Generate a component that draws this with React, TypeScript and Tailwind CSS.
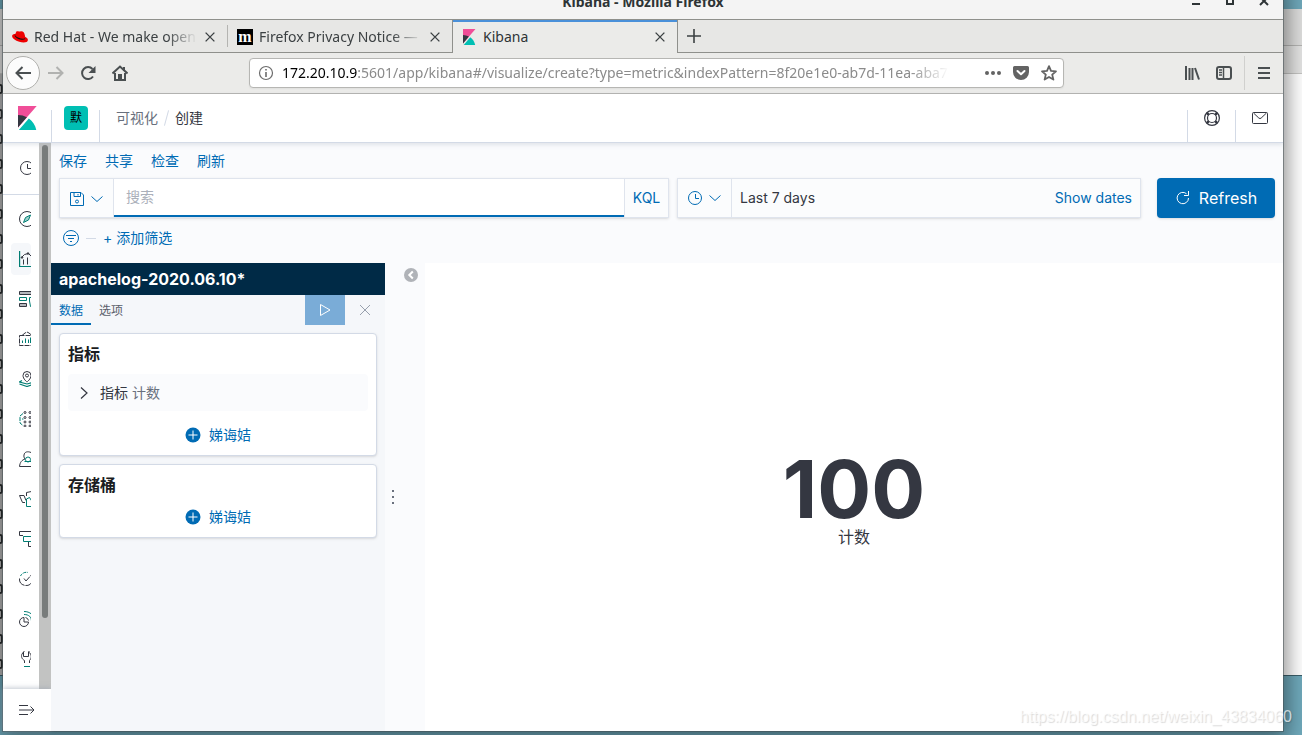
import { useState } from "react";
import type { ReactNode } from "react";

type IconProps = {
    children: ReactNode;
    className?: string;
}

const Icon = ({ children, className = "w-4 h-4" }: IconProps) => (
    <svg viewBox="0 0 16 16" fill="none" stroke="currentColor" className={`shrink-0 ${className}`} aria-hidden="true">
        {children}
    </svg>
);

const KibanaLogo = ({ className }: { className: string }) => (
    <svg viewBox="0 0 32 32" className={`shrink-0 ${className}`} aria-hidden="true">
        <path fill="#F04E98" d="M4 0v28.789L28.935.017z" />
        <path fill="#343741" d="M4 12v16.789l11.906-13.738A24.721 24.721 0 0 0 4 12" />
        <path fill="#00BFB3" d="M18.479 16.664 6.268 30.754l-1.073 1.237h23.191c-1.252-6.292-4.883-11.719-9.908-15.327" />
    </svg>
);

const RedHatLogo = () => (
    <svg viewBox="0 0 16 16" className="w-4 h-4 shrink-0" aria-hidden="true">
        <path fill="#e00" d="M4.4 2.6c.7-.6 1.7-.4 2.5-.1.9.3 1.4-.4 2.4-.2 2 .3 3 1.200 3.600 4.200l.3 1.500c1.600.500 2.800 1.700 2.700 3-.200 2.800-4.700 3-8.600 1.800C3.400 11.500 0 9.300.1 7c0-1.300 1.500-1.900 3.200-1.900z" />
        <path fill="#111" d="M3.300 5.200c-.2.500-.3 1.100.2 1.600 1.600 1.800 5.300 3.200 8.100 2.900 1.300-.1 1.900-.7 1.600-1.700l.1.500c.2 1.400-.8 2.200-2.400 2.300C7.900 11 4 9 3 7.200c-.4-.7-.2-1.400.3-2z" />
    </svg>
);

const CloseIcon = ({ className }: { className?: string }) => (
    <Icon className={className}><path strokeWidth="1.6" d="M3 3l10 10M13 3L3 13" /></Icon>
);

const Clock = () => <Icon><circle cx="8" cy="8" r="6.500" /><path d="M8.500 4v4.500H12" /></Icon>;

const ChevronDown = () => <Icon><path d="M2.500 5.500 8 10.500l5.500-5" /></Icon>;

const navItems = [
    {
        label: "Discover",
        icon: <><circle cx="8" cy="8" r="7.500" /><path stroke="#017d73" fill="#9fd0cb" d="M4.500 11.500 6.500 6.500l5-2.500-2 5z" /></>
    },
    {
        label: "Visualize",
        icon: <><path stroke="#017d73" strokeWidth="1.200" d="M.6 0v15.500H16" /><path d="M4.500 13.500V8.500M8.500 13.500V6.500M2.500 6.500l3-3 4-1 4 4" /><circle cx="3" cy="6.500" r=".8" fill="currentColor" /><circle cx="9" cy="2.500" r=".8" fill="currentColor" /></>
    },
    {
        label: "Dashboard",
        icon: <><path fill="#b5b7bc" d="M16 .5H.5v3H16" /><path fill="#b5b7bc" d="M.5 12.500h7v3h-7z" /><path stroke="#017d73" d="M.5 6.500h7v3h-7zM16 6.500h-5.500v3.500l1 5.500H16" /></>
    },
    {
        label: "Canvas",
        icon: <><path d="M.5 4.500h15v10H.5zM3 4.500l3-2.500 2-1 2 1 3 2.500" strokeDasharray="5 1" /><path stroke="#017d73" d="M3.500 12V9.500M6.500 12V7.500M9.500 12V8.500M11.500 12V6.500" /></>
    },
    {
        label: "Maps",
        icon: <><path d="M8 11S4 8 4 4.500a4 4 0 0 1 8 0C12 8 8 11 8 11z" /><circle cx="8" cy="4.500" r="1.500" /><path stroke="#017d73" strokeWidth="1.200" d="M3 9.500.5 11 8 13l7.500-2L13 9.500M.5 13 8 15.500l7.500-2.500" /></>
    },
    {
        label: "Machine Learning",
        icon: <><path stroke="#017d73" d="M4 2.500 1 5v7l3 2.500M4.500 8H3" strokeDasharray="4 1" /><circle cx="6" cy="1.500" r="1" /><circle cx="11" cy="1.500" r="1" /><circle cx="6" cy="6.500" r="1" /><circle cx="11" cy="6.500" r="1" /><circle cx="6" cy="11" r="1" /><circle cx="11" cy="11" r="1" /><circle cx="6" cy="15" r="1" /><circle cx="11" cy="15" r="1" /></>
    },
    {
        label: "Infrastructure",
        icon: <><path d="M12 1.500C9 .2 5.500.5 5 4c-.3 1.500 0 2.500 1 4C3 9 1 11 .5 15.500H16" /><path stroke="#017d73" d="M5.500 10.500h10" /><circle stroke="#017d73" cx="9" cy="8.500" r="2.500" /></>
    },
    {
        label: "Logs",
        icon: <><path d="M6 11.500H3.500L.5 4.500H5l2 5M7.500 5V1.500L12.500.5V5" /><path stroke="#017d73" d="M7.500 15.500V8l3-1.500 2.500 4v5z" /></>
    },
    {
        label: "APM",
        icon: <><path d="M16 .5H.5v4H4M9.500 11v4.500H16" /><path stroke="#017d73" d="M16 5.500H4.500v5H16" /></>
    },
    {
        label: "Uptime",
        icon: <><path d="M.5 7.500a6.500 6.500 0 0 0 13 1M5 7.500l2 2.500 7-8" strokeDasharray="9 1" /><path stroke="#017d73" d="M1.500 5A6.500 6.500 0 0 1 9 1.500" strokeDasharray="3 1" /></>
    },
    {
        label: "SIEM",
        icon: <><path d="M5 6.500a4.500 4.500 0 1 0 4.500 4.500H5z" /><path d="M6.500 6.500a4 4 0 0 1 3 3" /><path stroke="#017d73" d="M5 3.500c5 0 7.500 2.500 7.500 7M5 .5c6 0 10 3.500 10.500 9" /></>
    },
    {
        label: "Dev Tools",
        icon: <><path d="M5.500 12V9.500C2.500 8 2 5 3 3l1.500-2v4.500h5V1C13 3 13 7 10.500 9.500V12M4.500.5h1M9.500.5h1" /><path stroke="#017d73" d="M5 15.500h6" /></>
    },
];

const menuLinks = ["保存", "共享", "检查", "刷新"];

const BrowserTabs = () => (
    <div className="flex h-[33px] items-stretch border-b border-[#8f908c] bg-[#e7e7e5] text-sm text-[#3c4143]">
        <div className="flex w-56 items-center pl-[9px] pr-2.5 pt-0.5">
            <RedHatLogo />
            <a href="#redhat" className="ml-1.5 flex-1 overflow-hidden whitespace-nowrap [mask-image:linear-gradient(to_left,transparent,black_30px)]">Red Hat - We make open source</a>
            <button aria-label="Close tab" className="ml-1.5"><CloseIcon className="w-[14px] h-[14px]" /></button>
        </div>
        <div className="my-[5px] w-px bg-[#b4b4b1]" />
        <div className="flex w-56 items-center pl-[9px] pr-2.5 pt-0.5">
            <span className="flex h-4 w-4 shrink-0 items-center justify-center bg-black font-['Liberation_Serif',serif] text-base font-bold leading-4 text-white">m</span>
            <a href="#privacy" className="ml-1.5 flex-1 overflow-hidden whitespace-nowrap [mask-image:linear-gradient(to_left,transparent,black_30px)]">Firefox Privacy Notice — Mozilla</a>
            <button aria-label="Close tab" className="ml-1.5"><CloseIcon className="w-[14px] h-[14px]" /></button>
        </div>
        <div className="relative -mb-px flex w-[226px] items-center border-x border-[#8f908c] bg-[#ebebe9] pl-2 pr-2.5 shadow-[inset_0_3px_0_-1px_#4a90d9]">
            <KibanaLogo className="w-4 h-4" />
            <a href="#kibana" className="ml-1.5 flex-1 text-[#2e3436]">Kibana</a>
            <button aria-label="Close tab"><CloseIcon className="w-[14px] h-[14px]" /></button>
        </div>
        <button aria-label="New tab" className="ml-2"><Icon><path strokeWidth="1.600" d="M8 1v14M1 8h14" /></Icon></button>
    </div>
);

const AddressBar = () => (
    <div className="flex h-[41px] items-center border-b border-[#b3b3b0] bg-[#ebebe9] text-[#4a4f51]">
        <button aria-label="Back" className="ml-[3px] flex h-[34px] w-[34px] items-center justify-center rounded-full border border-[#b0b0ad] bg-[#fcfcfc]">
            <Icon><path strokeWidth="2" d="M16 8H1.500M7.500 2l-6 6 6 6" /></Icon>
        </button>
        <div className="ml-2 flex gap-4">
            <button aria-label="Forward" className="text-[#b1b2b0]"><Icon><path strokeWidth="2" d="M0 8h14.500M8.500 2l6 6-6 6" /></Icon></button>
            <button aria-label="Reload"><Icon><path strokeWidth="2" d="M13 11.500A6 6 0 1 1 12.500 4" /><path fill="currentColor" stroke="none" d="M15.500 1v7h-7z" /></Icon></button>
            <button aria-label="Home"><Icon><path strokeWidth="2" d="M.5 8.500 8 1.500l7.500 7M3 8v7h10V8" /><path fill="currentColor" stroke="none" d="M6 9h4v6H6zM11 2h2v4h-2z" /></Icon></button>
        </div>
        <div className="ml-[121px] flex h-[30px] w-[815px] items-center rounded border border-[#b6b6b3] bg-white px-2 shadow-xs">
            <Icon className="w-4 h-4 text-[#6c6c6c]"><circle cx="8" cy="8" r="6.500" strokeWidth="1.200" /><path strokeWidth="1.600" d="M8 7v5M8 4v1.600" /></Icon>
            <p className="ml-2 flex-1 overflow-hidden whitespace-nowrap text-sm text-[#8b8b8b] [mask-image:linear-gradient(to_left,transparent,black_40px)]">
                <span className="text-black">172.20.10.9</span>:5601/app/kibana#/visualize/create?type=metric&amp;indexPattern=8f20e1e0-ab7d-11ea-aba7-95
            </p>
            <div className="-mr-0.5 ml-9 flex gap-3 text-[#636363]">
                <button aria-label="Page actions"><Icon><g fill="currentColor" stroke="none"><circle cx="2" cy="8" r="2" /><circle cx="8" cy="8" r="2" /><circle cx="14" cy="8" r="2" /></g></Icon></button>
                <button aria-label="Save to Pocket"><Icon><path fill="currentColor" stroke="none" d="M1.500 1h13A1.500 1.500 0 0 1 16 2.500V7a8 8 0 0 1-16 0V2.500A1.500 1.500 0 0 1 1.500 1z" /><path stroke="white" strokeWidth="2" strokeLinecap="round" strokeLinejoin="round" d="M4.500 6 8 9.300 11.500 6" /></Icon></button>
                <button aria-label="Bookmark"><Icon><path strokeWidth="1.800" strokeLinejoin="round" d="m8 1.200 2 4.700 5 .4-3.800 3.300 1.200 5L8 12l-4.400 2.600 1.200-5L1 6.300l5-.4z" /></Icon></button>
            </div>
        </div>
        <div className="ml-auto flex items-center gap-4">
            <button aria-label="Library"><Icon><path strokeWidth="2" d="M2 1v14M5.500 3v12M8.500 3v12M11 3l4 11.500" /></Icon></button>
            <button aria-label="Sidebars"><Icon><rect x="1" y="2" width="14" height="12" rx="2" strokeWidth="2" /><path strokeWidth="1.500" d="M7.500 2v12M3 5h3M3 7.500h3M3 10h3" /></Icon></button>
        </div>
        <div className="ml-3 h-[34px] w-px bg-[#d0d0ce]" />
        <button aria-label="Open menu" className="mx-[11px]"><Icon><path strokeWidth="2" d="M2 3h12M2 8h12M2 13h12" /></Icon></button>
    </div>
);

const Divider = () => <div className="h-8 w-px self-end bg-[#d3dae6]" />;

const KibanaHeader = () => (
    <header className="relative z-10 flex h-[49px] items-center border-b border-[#d3dae6] bg-white shadow-[0_2px_4px_rgba(152,162,179,0.25)]">
        <a href="#home" aria-label="Kibana home" className="flex w-12 justify-center"><KibanaLogo className="w-6 h-6" /></a>
        <Divider />
        <button className="mx-[11px] ml-3 h-6 w-6 rounded bg-[#00bfb3] text-xs text-black">默</button>
        <Divider />
        <nav className="ml-4 flex items-center gap-2 text-sm">
            <a href="#visualize" className="text-[#69707d]">可视化</a>
            <div className="h-4 w-px rotate-[15deg] bg-[#d3dae6]" />
            <span className="text-[#343741]">创建</span>
        </nav>
        <div className="ml-auto flex self-stretch text-[#343741]">
            <Divider />
            <button aria-label="Help" className="flex w-[47px] items-center justify-center">
                <Icon><circle cx="8" cy="8" r="7.400" strokeWidth="1.200" /><circle cx="8" cy="8" r="4.500" strokeWidth="1.200" /><path strokeWidth="2.500" d="M2.800 2.800l2 2M13.200 2.800l-2 2M2.800 13.200l2-2M13.200 13.200l-2-2" /></Icon>
            </button>
            <Divider />
            <button aria-label="News" className="flex w-[47px] items-center justify-center">
                <Icon><rect x=".5" y="2.500" width="15" height="11" rx="1" /><path d="m1.500 3 5.300 5a1.700 1.700 0 0 0 2.400 0l5.300-5" /></Icon>
            </button>
        </div>
    </header>
);

const SideNav = () => (
    <aside className="flex w-12 shrink-0 flex-col bg-white text-[#343741]">
        <div className="flex flex-1">
            <div className="w-9">
                <div className="border-b border-[#d3dae6] pb-1.5 pt-[5px]">
                    <button aria-label="Recently viewed" className="ml-4 flex h-10 w-3 items-center overflow-hidden"><Clock /></button>
                </div>
                <nav>
                    {navItems.map((item) => (
                        <a key={item.label} href={`#${item.label}`} aria-label={item.label}
                            className={`my-2 ml-2 flex h-8 w-5 items-center overflow-hidden rounded pl-2 ${item.label == "Visualize" ? "bg-[#f5f7fa]" : ""}`}>
                            <Icon>{item.icon}</Icon>
                        </a>
                    ))}
                </nav>
            </div>
            <div className="flex w-3 justify-center bg-[#c2c3c2] pt-0.5">
                <div className="h-[87%] w-1.5 rounded-full bg-[#787c7b]" />
            </div>
        </div>
        <button aria-label="Expand" className="flex h-[42px] items-center pl-4 shadow-[0_-1px_5px_rgba(152,162,179,0.6)]">
            <Icon><path d="M0 3.500h9M0 8h15M0 12.500h9M11.500 4.500 15 8l-3.500 3.500" /></Icon>
        </button>
    </aside>
);

const QueryBar = () => {
    const [query, setQuery] = useState<string>("");

    return (
        <div className="flex h-10 text-sm text-[#006bb4]">
            <div className="flex flex-1 border border-[#dfe4ed] bg-[#fbfcfd] shadow-sm">
                <button aria-label="Saved queries" className="flex w-[54px] items-center justify-center gap-1 border-r border-[#dfe4ed] pt-0.5">
                    <Icon><path d="M1.500 1.500h10.500l2.500 2.500v10.500h-13zM5 1.500v4h6.500v-4M9 3v1.500" /><circle cx="8" cy="10.500" r="1.500" /></Icon>
                    <ChevronDown />
                </button>
                <input aria-label="搜索" placeholder="搜索" value={query} onChange={(e) => setQuery(e.target.value)}
                    className="min-w-0 flex-1 border-b-2 border-[#006bb4] bg-white px-3 text-[#343741] outline-none placeholder:text-[#abb0ba]" />
                <button className="w-11 border-l border-[#dfe4ed]">KQL</button>
            </div>
            <div className="ml-2 flex w-[464px] border border-[#dfe4ed] bg-[#fbfcfd] shadow-sm">
                <button aria-label="Quick select" className="flex w-[54px] items-center justify-center gap-1 border-r border-[#dfe4ed]">
                    <Clock />
                    <ChevronDown />
                </button>
                <button className="flex flex-1 items-center justify-between px-2">
                    <span className="text-[#343741]">Last 7 days</span>
                    <span>Show dates</span>
                </button>
            </div>
            <button className="ml-4 flex w-[118px] items-center justify-center gap-2 rounded bg-[#006bb4] text-base text-white shadow-sm">
                <Icon><path d="M13.500 8A5.700 5.700 0 1 1 11.500 3.700M13.500 1v4.500H9" /></Icon>
                Refresh
            </button>
        </div>
    );
};

const AddButton = () => (
    <button className="mx-auto flex h-6 items-center gap-2 text-sm text-[#006bb4]">
        <Icon><circle cx="8" cy="8" r="7.500" fill="currentColor" stroke="none" /><path stroke="white" d="M8 3.500v9M3.500 8h9" /></Icon>
        娣诲姞
    </button>
);

const EditorPanel = () => {
    const [tab, setTab] = useState<string>("数据");

    return (
        <section className="w-[334px] shrink-0 bg-[#f5f7fa]">
            <h2 className="h-8 bg-[#002a46] px-2 text-base font-bold leading-8 text-white">apachelog-2020.06.10*</h2>
            <div className="flex h-[30px] text-xs">
                {["数据", "选项"].map((name) => (
                    <button key={name} onClick={() => setTab(name)}
                        className={`w-10 border-b-2 pt-1 ${tab == name ? "border-[#006bb4] text-[#006bb4]" : "border-transparent text-[#5a606b]"}`}>
                        {name}
                    </button>
                ))}
                <button aria-label="Apply changes" className="ml-auto flex w-10 items-center justify-center bg-[#7aacd7] text-white">
                    <Icon><path d="M3.500 2.500v11l9.500-5.500z" /></Icon>
                </button>
                <button aria-label="Discard changes" className="flex w-10 items-center justify-center text-[#98a0ad]">
                    <Icon><path d="M3 3l10 10M13 3 3 13" /></Icon>
                </button>
            </div>
            <div className="flex flex-col gap-2 p-2">
                <div className="rounded border border-[#d3dae6] bg-white p-2 shadow-sm">
                    <h3 className="text-base font-bold leading-6 text-[#1a1c21]">指标</h3>
                    <button className="mb-3 mt-2 flex h-[37px] w-full items-center rounded bg-[#fafbfd] pl-2 text-sm text-[#343741]">
                        <Icon><path strokeWidth="1.200" d="M5 2.500 11 8l-6 5.500" /></Icon>
                        <span className="ml-2">指标 <span className="text-[#69707d]">计数</span></span>
                    </button>
                    <AddButton />
                </div>
                <div className="rounded border border-[#d3dae6] bg-white p-2 shadow-sm">
                    <h3 className="mb-2 text-base font-bold leading-6 text-[#1a1c21]">存储桶</h3>
                    <AddButton />
                </div>
            </div>
        </section>
    );
};

const BackgroundWindow = () => (
    <div className="absolute inset-x-0 bottom-[59px] top-[9px] flex flex-col overflow-hidden border-b border-[#3c5f6a] bg-white">
        <div className="h-[37px] shrink-0 border-b border-[#b5b5b3] bg-[#dededd]" />
        <div className="h-7 shrink-0 border-b border-[#c5c5c3] bg-[#e4e4e3]" />
        <div className="w-1 flex-1 bg-[#b9b9b9] pt-2.5">
            {Array.from({ length: 24 }, (_, i) => (
                <div key={i} className="mb-[15px] h-2.5 w-[3px] rounded-r-full border-2 border-l-0 border-[#2b2f31]" />
            ))}
        </div>
    </div>
);

const App = () => {
    return (
        <div className="relative flex min-h-screen flex-col overflow-hidden bg-[#6fa9bb] pb-1 pl-[3px] pr-[19px] font-[Inter,'Noto_Sans_CJK_SC',sans-serif]">
            <BackgroundWindow />
            <div className="relative -mt-4 flex flex-1 flex-col bg-[#fafbfd] shadow-[0_0_0_1px_rgba(70,80,84,0.55),0_4px_20px_4px_rgba(0,0,0,0.45)]">
                <div className="font-['Noto_Sans',sans-serif]">
                    <div className="relative flex h-9 items-center justify-center border-b border-[#8f908c] bg-[#f4f4f4] text-sm font-bold text-[#2e3436]">
                        Kibana - Mozilla Firefox
                        <div className="absolute right-[11px] top-2.5 flex gap-[18px]">
                            <button aria-label="Minimize"><Icon><path strokeWidth="2" d="M4 10h8" /></Icon></button>
                            <button aria-label="Maximize"><Icon><path strokeWidth="2" d="M5 3h6v7H5z" /></Icon></button>
                            <button aria-label="Close"><Icon><path strokeWidth="2" d="m4 3 8 8M12 3l-8 8" /></Icon></button>
                        </div>
                    </div>
                    <BrowserTabs />
                    <AddressBar />
                </div>
                <KibanaHeader />
                <div className="flex flex-1">
                    <SideNav />
                    <main className="flex min-w-0 flex-1 flex-col">
                        <div className="px-2 pb-3">
                            <nav className="flex h-[35px] items-center gap-[18px] text-sm text-[#006bb4]">
                                {menuLinks.map((link) => <a key={link} href={`#${link}`}>{link}</a>)}
                            </nav>
                            <QueryBar />
                            <div className="flex h-[33px] items-center pl-1 pt-[7px] text-sm text-[#006bb4]">
                                <button aria-label="Filter options"><Icon><circle cx="8" cy="8" r="7.500" /><path d="M3 5.500h10M5 8.500h6M7 11.500h2" /></Icon></button>
                                <div className="mx-[7px] h-px w-2.5 bg-[#d3dae6]" />
                                <button>+ 添加筛选</button>
                            </div>
                        </div>
                        <div className="flex flex-1">
                            <EditorPanel />
                            <div className="flex w-10 shrink-0 flex-col">
                                <button aria-label="Collapse editor" className="mr-1.5 mt-1 self-end text-[#b0b3b8]">
                                    <Icon><circle cx="8" cy="8" r="7" fill="currentColor" stroke="none" /><path stroke="white" strokeWidth="2" d="M9.800 4.500 6.300 8l3.500 3.500" /></Icon>
                                </button>
                                <div className="-mt-5 flex flex-1 items-center">
                                    <Icon><path stroke="#69707d" strokeWidth="2" strokeDasharray="2 4" d="M8 1v14" /></Icon>
                                </div>
                            </div>
                            <section className="flex flex-1 flex-col items-center justify-center bg-white text-[#343741]">
                                <div className="text-[80px] font-bold leading-[80px]">100</div>
                                <div className="text-base leading-4">计数</div>
                            </section>
                        </div>
                    </main>
                </div>
            </div>
            <p className="absolute bottom-1.5 right-2.5 font-['Liberation_Sans',sans-serif] text-base text-white/70 [text-shadow:1px_1px_1px_rgba(0,0,0,0.15)]">https://blog.csdn.net/weixin_43834060</p>
        </div>
    );
};

export default App;
